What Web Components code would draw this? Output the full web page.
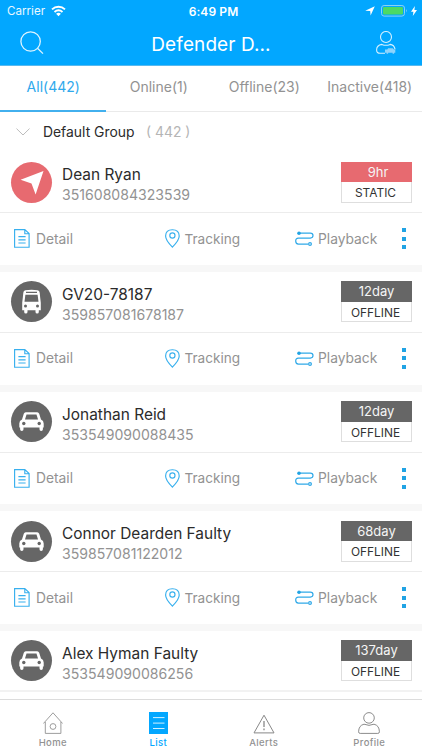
<!DOCTYPE html>
<html lang="en">
<head>
<meta charset="utf-8">
<title>Device list</title>
<style>
html,body{margin:0;height:100%;overflow:hidden;background:#fff}
body{font-family:Inter,"Liberation Sans",sans-serif;color:#2b2b2b}
</style>
</head>
<body>
<app-screen></app-screen>
<script>
const define = (name, css, html) => customElements.define(name, class extends HTMLElement {
  connectedCallback() {
    if (this.shadowRoot) return;
    const markup = typeof html === 'function' ? html(this) : html;
    this.attachShadow({mode: 'open'}).innerHTML = `<style>*{box-sizing:border-box}:host{box-sizing:border-box}${css}</style>${markup}`;
  }
});

const icons = {
  wifi: [15, 12, '<g fill="none" stroke="#fff" stroke-width="1.9"><path d="M1 4.4C4.7 .9 10.3 .9 14 4.4M3.5 7C5.9 4.9 9.1 4.9 11.5 7"/></g><path fill="#fff" d="M5.1 8.7Q7.5 6.9 9.9 8.7L7.5 11.2z"/>'],
  location: [10, 10, '<path fill="#fff" d="M9.8 .2 5.6 9.6 5.2 5 .2 4.8z"/>'],
  battery: [27, 12, '<rect x=".5" y=".5" width="23" height="10.6" rx="2.6" fill="none" stroke="#8ad2f7"/><rect x="2" y="2" width="20" height="7.6" rx="1.3" fill="#4cd964"/><path fill="#8ad2f7" d="M25 4q1.6 1.8 0 3.6z"/>'],
  bolt: [6, 10, '<path fill="#fff" d="M3.9 0 0 5.8h2.4L1.8 10 6 4.1H3.4z"/>'],
  search: [24, 24, '<g fill="none" stroke="#dff4ff" stroke-width="1.3"><circle cx="10.6" cy="10.5" r="9.7"/><path d="M17.5 17.3 23 22.6"/></g>'],
  driver: [20, 24, '<g fill="none" stroke="#d5f0ff" stroke-width="1.1"><circle cx="10" cy="6" r="5.5"/><path d="M9 22.3H4.2Q.6 22.3.6 19 .6 14.2 5.9 13.4q4.1 1.8 8.2 0 4.1.5 5 4.9"/></g><path fill="#8fd4fc" d="M9 18.4h2.2l1-1.1h4.5l1.3 1.1h1.3v3.4h-1.2v1h-1.5v-1h-4.5v1h-1.5v-1H9z"/>'],
  chevron: [14, 8, '<path d="M.5 .6 7 7 13.5.6" fill="none" stroke="#bcbcbc"/>'],
  arrow: [41, 41, '<path fill="#fff" d="M32.5 9 24.6 32.4 20.5 21.6 9.6 17.7z"/>'],
  bus: [41, 41, '<path fill="#fff" d="M14.4 9.3q6.2-1.2 12.2 0 1.9.4 2.1 2.5l.5 5 .6 5v7.4h-2v1.9q0 1.5-1.6 1.5-1.7 0-1.7-1.5v-1.9h-8v1.9q0 1.5-1.7 1.5-1.6 0-1.6-1.5v-1.9h-2v-7.4l.6-5 .5-5q.2-2.1 2.1-2.5z"/><path fill="#666" d="M15 10.8h11v1.2H15zM14.4 13.7h12.2l.9 7.1h-14z"/><circle cx="14.5" cy="25" r="1.5" fill="#666"/><circle cx="26.5" cy="25" r="1.5" fill="#666"/>'],
  car: [41, 41, '<path fill="#fff" d="M14.8 11.3h11.4q1.5 0 2 1.5l1.8 5.8q2.7 1 2.7 3.8v4h-.8v1.8q0 1.8-1.7 1.8t-1.7-1.8v-1.8h-16v1.8q0 1.8-1.7 1.8t-1.7-1.8v-1.8h-.8v-4q0-2.8 2.7-3.8l1.8-5.8q.5-1.5 2-1.5z"/><path fill="#666" d="M15.5 13.5h10l1.5 5H14z"/><circle cx="12.8" cy="22.5" r="1.7" fill="#666"/><circle cx="28.2" cy="22.5" r="1.7" fill="#666"/>'],
  detail: [16, 19, '<g fill="none" stroke="#38b0ee" stroke-width="1.15"><path d="M.6.6h10.2l4.3 4v13.6H.6zM10.8.8v3.9h4.1M4.4 7.6h7.2M4.4 10.8h7.2M4.4 14h7.2"/></g>'],
  pin: [15, 19, '<g fill="none" stroke="#38b0ee" stroke-width="1.15"><path d="M7.4 18.1Q.6 11.5.6 7.1.6.7 7.4.7t6.8 6.4q0 4.4-6.8 11z"/><circle cx="7.4" cy="6.5" r="2.6"/></g>'],
  route: [19, 15, '<g fill="none" stroke="#30a9e8" stroke-width="1.2"><path d="M4 2.2h11.3q2.7 0 2.7 2.4t-2.7 2.5H3.4Q.7 7.1.7 10t2.7 3.1h9.6"/><circle cx="15" cy="13" r="1.4"/></g><circle cx="4" cy="2.2" r="1.8" fill="#20a3e4"/>'],
  home: [20, 22, '<g fill="none" stroke="#929292" stroke-width=".9"><path d="M.4 11.5 10 .8l9.6 10.7M2.3 10v11.4h15.6V10"/><circle cx="10" cy="14.5" r="2.9"/></g>'],
  list: [19, 22, '<path fill="#02a7ff" d="M0 0h19v22H0z"/><path d="M4 5.6h11.5M4 11.1h11.5M4 16.5h11.5" stroke="#d3f1ff"/>'],
  alerts: [22, 20, '<g fill="none" stroke="#888"><path d="M11 1.2 21 18.9H1z"/><path stroke-width="1.3" d="M11 7v6M11 14.5v1.8"/></g>'],
  profile: [22, 22, '<g fill="none" stroke="#8c8c8c"><circle cx="11" cy="5.9" r="5.3"/><path d="M6 12.2q5 2.3 10 0 5.3 1.2 5.4 7.6 0 1.6-1.6 1.6H2.2q-1.6 0-1.6-1.6.1-6.4 5.4-7.6z"/></g>'],
};
define('ui-icon', ':host{display:block;flex:none}svg{display:block}', el => {
  const [w, h, body] = icons[el.getAttribute('name')];
  return `<svg width="${w}" height="${h}" viewBox="0 0 ${w} ${h}">${body}</svg>`;
});

define('status-bar', `
:host{display:grid;grid-template-columns:1fr auto 1fr;align-items:center;height:21px;padding:1px 5px 0 7px;color:#fff;font-size:12px}
div{display:flex;align-items:center}
.l{gap:6px;font-size:11.6px;color:#e9f8ff}.t{font-weight:600;letter-spacing:.1px;padding-left:3px}.r{justify-content:flex-end}
.b{margin-left:6px}.z{margin-left:3px}`,
`<div class="l"><span>Carrier</span><ui-icon name="wifi"></ui-icon></div><div class="t">6:49 PM</div>
<div class="r"><ui-icon name="location"></ui-icon><ui-icon class="b" name="battery"></ui-icon><ui-icon class="z" name="bolt"></ui-icon></div>`);

define('nav-bar', `
:host{display:grid;grid-template-columns:1fr auto 1fr;align-items:center;height:45px;padding:0 26px 0 20px;color:#fff;border-bottom:1px solid #58b9ef}
.title{font-size:19px;letter-spacing:.1px;padding:2px 0 0 6px}.user{justify-self:end}`,
`<ui-icon name="search"></ui-icon><div class="title"><slot></slot></div><ui-icon class="user" name="driver"></ui-icon>`);

define('filter-tab', `
:host{display:flex;flex:1;align-items:center;justify-content:center;padding:0 0 4px 1px;font-size:14px;color:#929292;border-bottom:1px solid #eaeaea;white-space:nowrap}
:host([active]){color:#2fa9ec;border-bottom:2px solid #42b0ee;padding-bottom:3px}`, '<slot></slot>');

define('group-header', `
:host{display:flex;align-items:center;height:40px;padding:0 16px 1px 16px;font-size:13.9px}
b{font-weight:400;margin-left:13px}span{margin-left:11.5px;color:#b5b5b5}`,
`<ui-icon name="chevron"></ui-icon><b><slot></slot></b><span><slot name="count"></slot></span>`);

define('status-badge', `
:host{display:block;width:71px;height:41px;text-align:center;border:1px solid #dedede;border-top:0;background:#fff}
.age{height:20.5px;margin:0 -1px;line-height:20.5px;font-size:13px;color:#f5f5f5;background:var(--tone)}
:host([state=STATIC]) .age{padding-left:3px}
.state{line-height:21px;font-size:11.9px;color:#333;padding-right:2px}`,
el => `<div class="age">${el.getAttribute('age')}</div><div class="state">${el.getAttribute('state')}</div>`);

define('action-link', `
:host{display:flex;align-items:center;font-size:13.8px;color:#929292}
:host([icon=pin]){font-size:13.6px}`,
el => `<ui-icon name="${el.getAttribute('icon')}"></ui-icon><span style="margin-left:${el.getAttribute('gap')}px"><slot></slot></span>`);

define('device-card', `
:host{display:block;flex:none;height:119.6px;border-bottom:7.6px solid #f7f7f7;background:#fff;--tone:#666}
:host([static]){--tone:#e76a70}
:host([compact]){height:auto;border:0}
.top{display:flex;height:61px;padding:0 10px 0 10.5px;align-items:center;border-bottom:1px solid #ececec}
:host([compact]) .top{border-bottom:2px solid #f2f2f2;padding-top:1px}
.avatar{width:41px;height:41px;border-radius:50%;background:var(--tone)}
.text{flex:1;margin-left:10.5px;padding-top:6px}
.name{font-size:15.45px;line-height:20px;color:#2b2b2b;white-space:nowrap}
.id{font-size:14.1px;line-height:20px;color:#929292}
.bottom{display:grid;grid-template-columns:150.5px 130px 1fr 5px;align-items:center;height:51px;padding:0 15.5px 0 14px}
.more{display:grid;gap:4.5px;width:4px}.more i{height:4px;background:#20a3e4}`,
el => `<div class="top"><div class="avatar"><ui-icon name="${el.getAttribute('icon')}"></ui-icon></div>
<div class="text"><div class="name">${el.getAttribute('name')}</div><div class="id">${el.getAttribute('imei')}</div></div>
<status-badge age="${el.getAttribute('age')}" state="${el.hasAttribute('static') ? 'STATIC' : 'OFFLINE'}"></status-badge></div>
${el.hasAttribute('compact') ? '' : `<div class="bottom"><action-link icon="detail" gap="6">Detail</action-link><action-link icon="pin" gap="5">Tracking</action-link><action-link icon="route" gap="4.5">Playback</action-link><div class="more"><i></i><i></i><i></i></div></div>`}`);

define('tab-item', `
:host{display:flex;flex:1;flex-direction:column;align-items:center;font-size:9.5px;letter-spacing:.35px;font-weight:500;color:#929292}
:host([active]){color:#02a7ff}
.i{height:22px;display:flex;align-items:flex-end}span{margin-top:2px;line-height:14px}`,
el => `<div class="i"><ui-icon name="${el.getAttribute('icon')}"></ui-icon></div><span><slot></slot></span>`);

const devices = [
  ['Dean Ryan', '351608084323539', 'arrow', '9hr', 'static'],
  ['GV20-78187', '359857081678187', 'bus', '12day', ''],
  ['Jonathan Reid', '353549090088435', 'car', '12day', ''],
  ['Connor Dearden Faulty', '359857081122012', 'car', '68day', ''],
  ['Alex Hyman Faulty', '353549090086256', 'car', '137day', 'compact'],
];
define('app-screen', `
:host{display:flex;flex-direction:column;width:422px;height:750px;overflow:hidden;background:#fff}
header{background:#02a7ff}
.tabs{display:flex;height:46px}
.list{flex:1;min-height:0;padding-top:.4px;display:flex;flex-direction:column}
footer{display:flex;height:51.5px;border-top:1px solid #dcdcdc;padding-top:12px;background:#fff}`,
`<header><status-bar></status-bar><nav-bar>Defender D...</nav-bar></header>
<div class="tabs"><filter-tab active>All(442)</filter-tab><filter-tab>Online(1)</filter-tab><filter-tab>Offline(23)</filter-tab><filter-tab>Inactive(418)</filter-tab></div>
<group-header>Default Group<span slot="count">( 442 )</span></group-header>
<div class="list">${devices.map(([n, id, ic, age, s]) => `<device-card name="${n}" imei="${id}" icon="${ic}" age="${age}" ${s}></device-card>`).join('')}</div>
<footer><tab-item icon="home">Home</tab-item><tab-item icon="list" active>List</tab-item><tab-item icon="alerts">Alerts</tab-item><tab-item icon="profile">Profile</tab-item></footer>`);
</script>
</body>
</html>
